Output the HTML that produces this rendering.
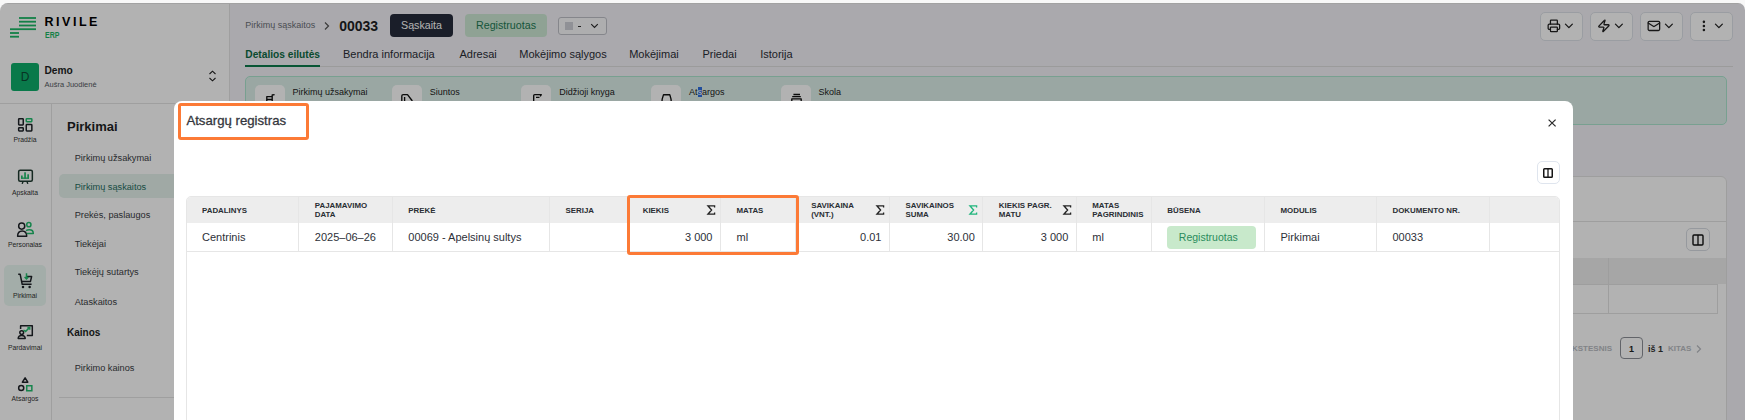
<!DOCTYPE html>
<html><head><meta charset="utf-8">
<style>
*{box-sizing:border-box;margin:0;padding:0}
html,body{width:1745px;height:420px;overflow:hidden;background:#f8f8f8;font-family:"Liberation Sans",sans-serif;color:#2a2d33}
#app{position:absolute;left:0;top:3px;width:1745px;height:417px;border-radius:8px 7px 0 0;overflow:hidden;background:#f4f3f8}
#pg{position:absolute;left:0;top:-3px;width:1745px;height:420px}
.b{position:absolute}
.t{position:absolute;white-space:nowrap;line-height:1}
#overlay{position:absolute;left:0;top:0;width:1745px;height:420px;background:rgba(0,0,0,.3)}
svg{position:absolute;overflow:visible}
</style></head><body>
<div id="app"><div id="pg">
  <!-- top border line -->
  <div class="b" style="left:0;top:3px;width:1745px;height:1px;background:#e8e8e8"></div>
  <!-- SIDEBAR -->
  <div class="b" style="left:0;top:4px;width:230px;height:416px;background:#fff;border-right:1px solid #e4e4e4"></div>
  <div class="b" style="left:0;top:103px;width:229px;height:1px;background:#e4e4e4"></div>
  <div class="b" style="left:51px;top:104px;width:1px;height:316px;background:#e4e4e4"></div>
  <!-- logo -->
  <svg style="left:0;top:0" width="40" height="40">
    <g fill="#1cb866">
      <rect x="19" y="17.1" width="17" height="1.8"/>
      <rect x="19" y="20.8" width="17" height="1.8"/>
      <rect x="19" y="24.6" width="17" height="1.8"/>
      <rect x="10" y="28.3" width="26" height="1.8"/>
      <rect x="10" y="32.1" width="9" height="1.8"/>
      <rect x="10" y="35.8" width="9" height="1.8"/>
    </g>
  </svg>
  <div class="t" style="left:44.5px;top:15.6px;font-size:12.5px;font-weight:700;letter-spacing:2.52px;color:#000">RIVILE</div>
  <div class="t" style="left:44.8px;top:30.9px;font-size:8.3px;font-weight:700;color:#1cb866;transform:scaleX(0.84);transform-origin:0 0">ERP</div>
  <!-- org -->
  <div class="b" style="left:11px;top:63px;width:28px;height:28px;border-radius:3px;background:#0eae6a"></div>
  <div class="t" style="left:11px;top:71px;width:28px;text-align:center;font-size:12px;color:#0b4a33">D</div>
  <div class="t" style="left:44.5px;top:66px;font-size:10.2px;font-weight:700;color:#1d1f24">Demo</div>
  <div class="t" style="left:44.5px;top:80.6px;font-size:7.5px;color:#555a62">Aušra Juodienė</div>
  <svg style="left:208px;top:70px" width="9" height="12"><path d="M1.5 4 L4.5 1.2 L7.5 4 M1.5 8 L4.5 10.8 L7.5 8" fill="none" stroke="#222" stroke-width="1.1"/></svg>

  <!-- rail -->
  <div class="b" style="left:4px;top:265px;width:42px;height:41px;border-radius:5px;background:#eaf8f2"></div>
  <!-- Pradzia icon -->
  <svg style="left:17px;top:117px" width="16" height="16">
    <g fill="none" stroke="#1f2329" stroke-width="1.5">
      <rect x="1.65" y="1.75" width="4.6" height="6.2" rx="0.6"/>
      <rect x="1.65" y="10.75" width="4.6" height="3.2" rx="0.6"/>
      <rect x="9.25" y="7.55" width="5.6" height="6.4" rx="0.6"/>
    </g>
    <rect x="9.25" y="1.75" width="5.6" height="2.9" rx="0.6" fill="none" stroke="#22bd6e" stroke-width="1.5"/>
  </svg>
  <div class="t" style="left:0;top:137.2px;width:50px;text-align:center;font-size:6.8px;color:#333">Pradžia</div>
  <!-- Apskaita icon -->
  <svg style="left:17px;top:169px" width="16" height="16">
    <rect x="1.65" y="1.35" width="13.7" height="11" rx="1.5" fill="none" stroke="#1f3a30" stroke-width="1.5"/>
    <path d="M5.2 14.9 L6 12.5 M10.8 14.9 L10 12.5" stroke="#1f3a30" stroke-width="1.4"/>
    <g fill="#22bd6e"><rect x="4" y="6.5" width="1.7" height="3.2"/><rect x="7.2" y="3.3" width="1.7" height="6.4"/><rect x="10.3" y="5.3" width="1.7" height="4.4"/><rect x="4" y="8.5" width="8" height="1.3"/></g>
  </svg>
  <div class="t" style="left:0;top:189.7px;width:50px;text-align:center;font-size:6.8px;color:#333">Apskaita</div>
  <!-- Personalas icon -->
  <svg style="left:16px;top:221px" width="20" height="17">
    <circle cx="5.7" cy="5.1" r="3.05" fill="none" stroke="#1f2329" stroke-width="1.5"/>
    <path d="M1.6 15.2 C1.6 11.4 3.5 9.9 6.2 9.9 C8.8 9.9 10.7 11.4 10.7 15.2 Z" fill="none" stroke="#1f2329" stroke-width="1.5" stroke-linejoin="round"/>
    <circle cx="12.85" cy="3.65" r="2.1" fill="none" stroke="#22bd6e" stroke-width="1.5"/>
    <path d="M10 9.6 C11 8.9 12 8.7 13.4 8.7 C15.9 8.7 17.3 10 17.3 12.4 L10.8 12.4" fill="none" stroke="#22bd6e" stroke-width="1.5" stroke-linejoin="round"/>
  </svg>
  <div class="t" style="left:0;top:241.7px;width:50px;text-align:center;font-size:6.8px;color:#333">Personalas</div>
  <!-- Pirkimai icon -->
  <svg style="left:17px;top:272px" width="17" height="17">
    <path d="M1.2 2.3 H3.2 L5.2 12.3 H14.6" fill="none" stroke="#1f2329" stroke-width="1.5" stroke-linejoin="round"/>
    <path d="M9.6 4.6 H14.6 L13.4 9.6 H4.6" fill="none" stroke="#1f2329" stroke-width="1.5" stroke-linejoin="round"/>
    <circle cx="6" cy="15.1" r="1.25" fill="#1f2329"/><circle cx="12.6" cy="15.1" r="1.25" fill="#1f2329"/>
    <path d="M9.5 1.2 V6.8 M7.6 4.9 L9.5 6.9 L11.4 4.9" fill="none" stroke="#22bd6e" stroke-width="1.5"/>
  </svg>
  <div class="t" style="left:0;top:292.7px;width:50px;text-align:center;font-size:6.8px;color:#333">Pirkimai</div>
  <!-- Pardavimai icon -->
  <svg style="left:17px;top:324px" width="17" height="17">
    <path d="M3.6 5 V1.75 H15.3 V11.4 H9.8" fill="none" stroke="#1f2329" stroke-width="1.5" stroke-linejoin="round"/>
    <circle cx="4.7" cy="8.6" r="1.9" fill="none" stroke="#1f2329" stroke-width="1.5"/>
    <path d="M1.2 14.6 C1.2 12.4 2.6 11.5 4.7 11.5 C6.8 11.5 8.2 12.4 8.2 14.6 Z" fill="none" stroke="#1f2329" stroke-width="1.5" stroke-linejoin="round"/>
    <path d="M6.5 6 L8.6 7.5 L12.4 3.6 M10.4 3.4 H12.7 V5.7" fill="none" stroke="#22bd6e" stroke-width="1.5"/>
  </svg>
  <div class="t" style="left:0;top:344.6px;width:50px;text-align:center;font-size:6.8px;color:#333">Pardavimai</div>
  <!-- Atsargos icon -->
  <svg style="left:17px;top:376px" width="17" height="17">
    <path d="M8.1 1.8 L10.8 6.2 H5.4 Z" fill="none" stroke="#1f2329" stroke-width="1.5" stroke-linejoin="round"/>
    <circle cx="4.2" cy="11.95" r="2.55" fill="none" stroke="#1f2329" stroke-width="1.5"/>
    <rect x="9.75" y="9.75" width="5.1" height="5" fill="none" stroke="#22bd6e" stroke-width="1.5"/>
  </svg>
  <div class="t" style="left:0;top:396.3px;width:50px;text-align:center;font-size:6.8px;color:#333">Atsargos</div>

  <!-- nav -->
  <div class="t" style="left:67px;top:120px;font-size:13px;font-weight:700;color:#1d1f24">Pirkimai</div>
  <div class="t" style="left:74.7px;top:153.9px;font-size:9.2px;color:#3a3d44">Pirkimų užsakymai</div>
  <div class="b" style="left:59px;top:174px;width:180px;height:24px;border-radius:5px;background:#e5f2ed"></div>
  <div class="t" style="left:74.7px;top:182.9px;font-size:9.2px;color:#1f6e60">Pirkimų sąskaitos</div>
  <div class="t" style="left:74.7px;top:211.4px;font-size:9.2px;color:#3a3d44">Prekės, paslaugos</div>
  <div class="t" style="left:74.7px;top:239.9px;font-size:9.2px;color:#3a3d44">Tiekėjai</div>
  <div class="t" style="left:74.7px;top:268.1px;font-size:9.2px;color:#3a3d44">Tiekėjų sutartys</div>
  <div class="t" style="left:74.7px;top:297.6px;font-size:9.2px;color:#3a3d44">Ataskaitos</div>
  <div class="t" style="left:67px;top:328.4px;font-size:10px;font-weight:700;color:#1d1f24">Kainos</div>
  <div class="t" style="left:74.7px;top:364.1px;font-size:9.2px;color:#3a3d44">Pirkimo kainos</div>
  <div class="b" style="left:59px;top:397px;width:170px;height:1px;background:#e4e4e4"></div>

  <!-- MAIN -->
  <!--MAIN_START-->
  <!-- breadcrumb -->
  <div class="t" style="left:245.3px;top:21.4px;font-size:9px;color:#6b6f76">Pirkimų sąskaitos</div>
  <svg style="left:323px;top:21px" width="8" height="10"><path d="M2 1.5 L5.5 5 L2 8.5" fill="none" stroke="#555" stroke-width="1.2"/></svg>
  <div class="t" style="left:339.2px;top:18.9px;font-size:14px;font-weight:700;color:#1d1f24">00033</div>
  <div class="b" style="left:390px;top:14px;width:63px;height:23px;border-radius:4px;background:#262b3b"></div>
  <div class="t" style="left:390px;top:20.3px;width:63px;text-align:center;font-size:10.7px;color:#fff">Sąskaita</div>
  <div class="b" style="left:465px;top:14px;width:82px;height:23px;border-radius:4px;background:#cde9d4"></div>
  <div class="t" style="left:465px;top:20.3px;width:82px;text-align:center;font-size:10.7px;color:#237a55">Registruotas</div>
  <div class="b" style="left:558px;top:17px;width:49px;height:18px;border-radius:3px;border:1px solid #bfc1c8;background:#f9f9fb"></div>
  <div class="b" style="left:565px;top:21.8px;width:8px;height:8px;background:#cfd0d7"></div>
  <div class="b" style="left:577.7px;top:25.6px;width:3.2px;height:1.1px;background:#333"></div>
  <svg style="left:589.5px;top:22.5px" width="9" height="6"><path d="M1.2 1.2 L4.5 4.5 L7.8 1.2" fill="none" stroke="#2a2a2a" stroke-width="1.15"/></svg>
  <!-- right toolbar buttons -->
  <div class="b" style="left:1539.5px;top:11.5px;width:43px;height:29px;border-radius:5px;border:1px solid #dde1e8;background:#fff"></div>
  <svg style="left:1547.1px;top:19.1px" width="13.8" height="13.8" viewBox="0 0 24 24" fill="none" stroke="#222" stroke-width="2.2" stroke-linecap="round" stroke-linejoin="round"><path d="M6 18H4a2 2 0 0 1-2-2v-5a2 2 0 0 1 2-2h16a2 2 0 0 1 2 2v5a2 2 0 0 1-2 2h-2"/><path d="M6 9V3a1 1 0 0 1 1-1h10a1 1 0 0 1 1 1v6"/><rect x="6" y="14" width="12" height="8" rx="1"/></svg>
  <svg style="left:1562.1px;top:19.1px" width="13.8" height="13.8" viewBox="0 0 24 24" fill="none" stroke="#222" stroke-width="2.2" stroke-linecap="round" stroke-linejoin="round"><path d="m6 9 6 6 6-6"/></svg>
  <div class="b" style="left:1589.5px;top:11.5px;width:43px;height:29px;border-radius:5px;border:1px solid #dde1e8;background:#fff"></div>
  <svg style="left:1597.1px;top:19.1px" width="13.8" height="13.8" viewBox="0 0 24 24" fill="none" stroke="#222" stroke-width="2.2" stroke-linecap="round" stroke-linejoin="round"><path d="M4 14a1 1 0 0 1-.78-1.63l9.9-10.2a.5.5 0 0 1 .86.46l-1.92 6.02A1 1 0 0 0 13 10h7a1 1 0 0 1 .78 1.63l-9.9 10.2a.5.5 0 0 1-.86-.46l1.92-6.02A1 1 0 0 0 11 14z"/></svg>
  <svg style="left:1612.1px;top:19.1px" width="13.8" height="13.8" viewBox="0 0 24 24" fill="none" stroke="#222" stroke-width="2.2" stroke-linecap="round" stroke-linejoin="round"><path d="m6 9 6 6 6-6"/></svg>
  <div class="b" style="left:1639.5px;top:11.5px;width:43px;height:29px;border-radius:5px;border:1px solid #dde1e8;background:#fff"></div>
  <svg style="left:1647.1px;top:19.1px" width="13.8" height="13.8" viewBox="0 0 24 24" fill="none" stroke="#222" stroke-width="2.2" stroke-linecap="round" stroke-linejoin="round"><rect x="2" y="4" width="20" height="16" rx="2"/><path d="m22 7-8.97 5.7a1.94 1.94 0 0 1-2.06 0L2 7"/></svg>
  <svg style="left:1662.1px;top:19.1px" width="13.8" height="13.8" viewBox="0 0 24 24" fill="none" stroke="#222" stroke-width="2.2" stroke-linecap="round" stroke-linejoin="round"><path d="m6 9 6 6 6-6"/></svg>
  <div class="b" style="left:1689.5px;top:11.5px;width:43px;height:29px;border-radius:5px;border:1px solid #dde1e8;background:#fff"></div>
  <svg style="left:1697.1px;top:19.1px" width="13.8" height="13.8" viewBox="0 0 24 24" fill="none" stroke="#222" stroke-width="2.4" stroke-linecap="round" stroke-linejoin="round"><circle cx="12" cy="12" r="1"/><circle cx="12" cy="5" r="1"/><circle cx="12" cy="19" r="1"/></svg>
  <svg style="left:1712.1px;top:19.1px" width="13.8" height="13.8" viewBox="0 0 24 24" fill="none" stroke="#222" stroke-width="2.2" stroke-linecap="round" stroke-linejoin="round"><path d="m6 9 6 6 6-6"/></svg>

  <!-- tabs -->
  <div class="b" style="left:245px;top:66px;width:1488px;height:1px;background:#dedede"></div>
  <div class="t" style="left:245.3px;top:49.6px;font-size:10.2px;font-weight:700;color:#0e6b45">Detalios eilutės</div>
  <div class="b" style="left:245px;top:65px;width:75px;height:2px;background:#0d7a4c"></div>
  <div class="t" style="left:343px;top:48.5px;font-size:11px;color:#2a2d36">Bendra informacija</div>
  <div class="t" style="left:459.5px;top:48.5px;font-size:11px;color:#2a2d36">Adresai</div>
  <div class="t" style="left:519.3px;top:48.5px;font-size:11px;color:#2a2d36">Mokėjimo sąlygos</div>
  <div class="t" style="left:629.2px;top:48.5px;font-size:11px;color:#2a2d36">Mokėjimai</div>
  <div class="t" style="left:702.4px;top:48.5px;font-size:11px;color:#2a2d36">Priedai</div>
  <div class="t" style="left:760.2px;top:48.5px;font-size:11px;color:#2a2d36">Istorija</div>

  <!-- green info box -->
  <div class="b" style="left:245px;top:75.5px;width:1482px;height:49.5px;border-radius:5px;border:1px solid #ace6cf;background:#ddf0ea"></div>
  <div class="b" style="left:255px;top:85px;width:30px;height:30px;border-radius:5px;background:#fff"></div>
  <div class="t" style="left:292.6px;top:88px;font-size:9px;color:#222">Pirkimų užsakymai</div>
  <div class="b" style="left:392px;top:85px;width:30px;height:30px;border-radius:5px;background:#fff"></div>
  <div class="t" style="left:429.7px;top:88px;font-size:9px;color:#222">Siuntos</div>
  <div class="b" style="left:521px;top:85px;width:30px;height:30px;border-radius:5px;background:#fff"></div>
  <div class="t" style="left:559.3px;top:88px;font-size:9px;color:#222">Didžioji knyga</div>
  <div class="b" style="left:651px;top:85px;width:30px;height:30px;border-radius:5px;background:#fff"></div>
  <div class="t" style="left:689px;top:88px;font-size:9px;color:#222">At<span style="background:#2f6fe0;color:#fff">s</span>argos</div>
  <div class="b" style="left:781px;top:85px;width:30px;height:30px;border-radius:5px;background:#fff"></div>
  <div class="t" style="left:818.5px;top:88px;font-size:9px;color:#222">Skola</div>
  <!-- small icon glimpses (top parts) -->
  <svg style="left:0;top:0" width="900" height="110">
    <g fill="none" stroke="#111" stroke-width="1.35" stroke-linejoin="round">
      <path d="M266.8 103 V96.6 H272.2 V96.6 M272.2 101 V95 L274.6 94.6"/>
      <path d="M266.8 99.5 H272"/>
      <path d="M401.8 103 V96 Q401.8 94.6 403.2 94.6 H407.5 L412 100.5 V103"/>
      <path d="M404.6 97 V103"/>
      <path d="M533.7 103 V95.6 Q533.7 94.6 534.7 94.6 H541.3 L540.2 96.3 M536 97.4 H539.5"/>
      <path d="M661.8 103 Q661.8 99 663.5 94.7 H669.8 Q671.4 99 671.4 103"/>
      <path d="M793.4 94.5 H800 M792.2 96.6 H800.8 M791.8 103 V98.8 H801.2 V103"/>
    </g>
  </svg>

  <!-- background card -->
  <div class="b" style="left:245px;top:176px;width:1482px;height:260px;border-radius:6px;border:1px solid #e2e2e2;background:#fff"></div>
  <div class="b" style="left:245px;top:221px;width:1482px;height:1px;background:#e2e2e2"></div>
  <div class="b" style="left:1686px;top:228px;width:24px;height:23px;border-radius:5px;border:1px solid #d7dbe2;background:#fff"></div>
  <svg style="left:1692px;top:234px" width="12" height="12"><rect x="1" y="1" width="10" height="10" rx="1" fill="none" stroke="#111" stroke-width="1.4"/><path d="M6 1 V11" stroke="#111" stroke-width="1.3"/></svg>
  <div class="b" style="left:245px;top:258px;width:1481px;height:26px;background:#eeeeee"></div>
  <div class="b" style="left:255px;top:284px;width:1463px;height:30px;border:1px solid #e2e2e2;border-top:none"></div>
  <div class="b" style="left:255px;top:284px;width:1462px;height:1px;background:#e2e2e2"></div>
  <div class="b" style="left:1608px;top:258px;width:1px;height:56px;background:#e2e2e2"></div>
  <div class="t" style="left:1572px;top:345px;font-size:8px;font-weight:700;color:#b9bcc2">KSTESNIS</div>
  <div class="b" style="left:1620px;top:337px;width:23px;height:22px;border-radius:4px;border:1px solid #8d9097;background:#fff"></div>
  <div class="t" style="left:1620px;top:344.5px;width:23px;text-align:center;font-size:9px;font-weight:700;color:#222">1</div>
  <div class="t" style="left:1648px;top:344.5px;font-size:9px;font-weight:700;color:#333">iš 1</div>
  <div class="t" style="left:1668px;top:345px;font-size:8px;font-weight:700;color:#b9bcc2">KITAS</div>
  <svg style="left:1695px;top:344px" width="8" height="10"><path d="M2 1.5 L5.5 5 L2 8.5" fill="none" stroke="#b9bcc2" stroke-width="1.2"/></svg>
<!--MAIN_END-->
  <div id="overlay"></div>
</div></div>
<!--MODAL_START-->
<div class="b" style="left:174px;top:101px;width:1399px;height:340px;border-radius:8px;background:#fff"></div>
<div class="t" style="left:186.4px;top:113.6px;font-size:13.2px;color:#34363c;-webkit-text-stroke:0.3px #34363c">Atsargų registras</div>
<div class="b" style="left:178px;top:103px;width:131px;height:37px;border-radius:3px;border:3px solid #fc7a36"></div>
<svg style="left:1547.8px;top:118.5px" width="8.5" height="8"><path d="M0.6 0.6 L7.6 7.4 M7.6 0.6 L0.6 7.4" stroke="#2a2a2a" stroke-width="1.25"/></svg>
<div class="b" style="left:1536.5px;top:161px;width:23px;height:23px;border-radius:5px;border:1px solid #dfe5ee;background:#fff"></div>
<svg style="left:1543px;top:168px" width="10" height="10"><rect x="0.75" y="0.75" width="8.5" height="8.5" rx="0.8" fill="none" stroke="#151515" stroke-width="1.5"/><path d="M5 1 V9" stroke="#151515" stroke-width="1.3"/></svg>
<div class="b" style="left:186px;top:196px;width:1374px;height:260px;border-radius:5px 5px 0 0;border:1px solid #e6e6e6;background:#fff;overflow:hidden"><div class="b" style="left:0;top:0;width:1372px;height:25.5px;background:#ededed"></div></div>
<div class="b" style="left:186px;top:251px;width:1374px;height:1px;background:#e6e6e6"></div>
<div class="b" style="left:298.3px;top:197px;width:1px;height:54px;background:#e6e6e6"></div>
<div class="b" style="left:391.8px;top:197px;width:1px;height:54px;background:#e6e6e6"></div>
<div class="b" style="left:549.0px;top:197px;width:1px;height:54px;background:#e6e6e6"></div>
<div class="b" style="left:628.0px;top:197px;width:1px;height:54px;background:#e6e6e6"></div>
<div class="b" style="left:720.0px;top:197px;width:1px;height:54px;background:#e6e6e6"></div>
<div class="b" style="left:794.7px;top:197px;width:1px;height:54px;background:#e6e6e6"></div>
<div class="b" style="left:889.0px;top:197px;width:1px;height:54px;background:#e6e6e6"></div>
<div class="b" style="left:982.3px;top:197px;width:1px;height:54px;background:#e6e6e6"></div>
<div class="b" style="left:1075.8px;top:197px;width:1px;height:54px;background:#e6e6e6"></div>
<div class="b" style="left:1150.8px;top:197px;width:1px;height:54px;background:#e6e6e6"></div>
<div class="b" style="left:1264.0px;top:197px;width:1px;height:54px;background:#e6e6e6"></div>
<div class="b" style="left:1376.0px;top:197px;width:1px;height:54px;background:#e6e6e6"></div>
<div class="b" style="left:1489.0px;top:197px;width:1px;height:54px;background:#e6e6e6"></div>
<div class="t" style="left:202.0px;top:206.8px;font-size:7.9px;font-weight:700;color:#2a2d33">PADALINYS</div>
<div class="t" style="left:202.0px;top:231.5px;font-size:11px;color:#2d3038">Centrinis</div>
<div class="t" style="left:314.8px;top:202.4px;font-size:7.9px;line-height:8.2px;font-weight:700;color:#2a2d33">PAJAMAVIMO<br>DATA</div>
<div class="t" style="left:314.8px;top:231.5px;font-size:11px;color:#2d3038">2025–06–26</div>
<div class="t" style="left:408.3px;top:206.8px;font-size:7.9px;font-weight:700;color:#2a2d33">PREKĖ</div>
<div class="t" style="left:408.3px;top:231.5px;font-size:11px;color:#2d3038">00069 - Apelsinų sultys</div>
<div class="t" style="left:565.5px;top:206.8px;font-size:7.9px;font-weight:700;color:#2a2d33">SERIJA</div>
<div class="t" style="left:642.7px;top:206.8px;font-size:7.9px;font-weight:700;color:#2a2d33">KIEKIS</div>
<svg style="left:706.7px;top:205px" width="9" height="10"><path d="M7.6 2.6 V0.8 H0.9 L4.6 5 L0.9 9.2 H7.6 V7.4" fill="none" stroke="#222" stroke-width="1.3" stroke-linejoin="miter"/></svg>
<div class="t" style="left:626.7px;top:231.5px;width:85.8px;text-align:right;font-size:11px;color:#2d3038">3 000</div>
<div class="t" style="left:736.5px;top:206.8px;font-size:7.9px;font-weight:700;color:#2a2d33">MATAS</div>
<div class="t" style="left:736.5px;top:231.5px;font-size:11px;color:#2d3038">ml</div>
<div class="t" style="left:811.2px;top:202.4px;font-size:7.9px;line-height:8.2px;font-weight:700;color:#2a2d33">SAVIKAINA<br>(VNT.)</div>
<svg style="left:875.7px;top:205px" width="9" height="10"><path d="M7.6 2.6 V0.8 H0.9 L4.6 5 L0.9 9.2 H7.6 V7.4" fill="none" stroke="#222" stroke-width="1.3" stroke-linejoin="miter"/></svg>
<div class="t" style="left:795.2px;top:231.5px;width:86.3px;text-align:right;font-size:11px;color:#2d3038">0.01</div>
<div class="t" style="left:905.5px;top:202.4px;font-size:7.9px;line-height:8.2px;font-weight:700;color:#2a2d33">SAVIKAINOS<br>SUMA</div>
<svg style="left:969.0px;top:205px" width="9" height="10"><path d="M7.6 2.6 V0.8 H0.9 L4.6 5 L0.9 9.2 H7.6 V7.4" fill="none" stroke="#1fb57c" stroke-width="1.3" stroke-linejoin="miter"/></svg>
<div class="t" style="left:889.5px;top:231.5px;width:85.3px;text-align:right;font-size:11px;color:#2d3038">30.00</div>
<div class="t" style="left:998.8px;top:202.4px;font-size:7.9px;line-height:8.2px;font-weight:700;color:#2a2d33">KIEKIS PAGR.<br>MATU</div>
<svg style="left:1062.5px;top:205px" width="9" height="10"><path d="M7.6 2.6 V0.8 H0.9 L4.6 5 L0.9 9.2 H7.6 V7.4" fill="none" stroke="#222" stroke-width="1.3" stroke-linejoin="miter"/></svg>
<div class="t" style="left:982.8px;top:231.5px;width:85.5px;text-align:right;font-size:11px;color:#2d3038">3 000</div>
<div class="t" style="left:1092.3px;top:202.4px;font-size:7.9px;line-height:8.2px;font-weight:700;color:#2a2d33">MATAS<br>PAGRINDINIS</div>
<div class="t" style="left:1092.3px;top:231.5px;font-size:11px;color:#2d3038">ml</div>
<div class="t" style="left:1167.3px;top:206.8px;font-size:7.9px;font-weight:700;color:#2a2d33">BŪSENA</div>
<div class="b" style="left:1167px;top:225.8px;width:89px;height:23px;border-radius:4px;background:#c8e9cb"></div>
<div class="t" style="left:1178.8px;top:231.9px;font-size:10.5px;color:#2a8c5d">Registruotas</div>
<div class="t" style="left:1280.5px;top:206.8px;font-size:7.9px;font-weight:700;color:#2a2d33">MODULIS</div>
<div class="t" style="left:1280.5px;top:231.5px;font-size:11px;color:#2d3038">Pirkimai</div>
<div class="t" style="left:1392.5px;top:206.8px;font-size:7.9px;font-weight:700;color:#2a2d33">DOKUMENTO NR.</div>
<div class="t" style="left:1392.5px;top:231.5px;font-size:11px;color:#2d3038">00033</div>
<div class="b" style="left:627px;top:194.5px;width:172px;height:60px;border-radius:3px;border:3px solid #fc7a36"></div>
<!--MODAL_END-->
</body></html>
